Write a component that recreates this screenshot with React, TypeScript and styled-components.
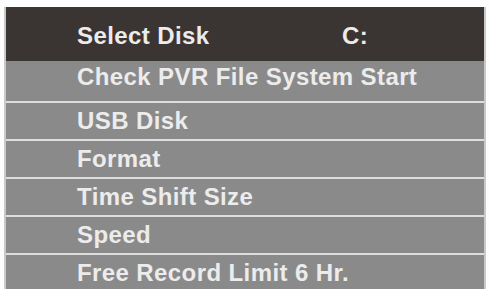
import React from 'react';
import styled, {createGlobalStyle} from 'styled-components';

const GlobalStyle = createGlobalStyle`
    html, body {
        margin: 0;
        padding: 0;
        background: #fdfdfd;
    }
`;

const Menu = styled.div`
    margin: 7px 4px 0 4px;
    border-left: 2px solid #c9c9c9;
    border-right: 2px solid #c9c9c9;
    font-family: "Liberation Sans", Arial, sans-serif;
    font-weight: bold;
    font-size: 24px;
    letter-spacing: 0.4px;
    color: #ececec;
`;

const Header = styled.div`
    height: 54px;
    background: #3a3533;
    display: flex;
    align-items: center;
    padding-left: 71px;
    padding-top: 3px;
    box-sizing: border-box;
`;

const HeaderLabel = styled.span`
    width: 265px;
`;

const Row = styled.div<{$first?: boolean}>`
    height: ${p => p.$first ? 40 : 38}px;
    box-sizing: border-box;
    border-top: ${p => p.$first ? 'none' : '2px solid #dedede'};
    background: #8a8a8a;
    display: flex;
    align-items: center;
    padding-left: 71px;
    padding-bottom: ${p => p.$first ? 9 : 1}px;
    white-space: nowrap;
`;

const items = [
    'Check PVR File System Start',
    'USB Disk',
    'Format',
    'Time Shift Size',
    'Speed',
    'Free Record Limit 6 Hr.',
];

export default function App() {
    return (
        <>
            <GlobalStyle/>
            <Menu>
                <Header>
                    <HeaderLabel>Select Disk</HeaderLabel>
                    <span>C:</span>
                </Header>
                {items.map((item, i) => (
                    <Row key={item} $first={i === 0}>{item}</Row>
                ))}
            </Menu>
        </>
    );
}
